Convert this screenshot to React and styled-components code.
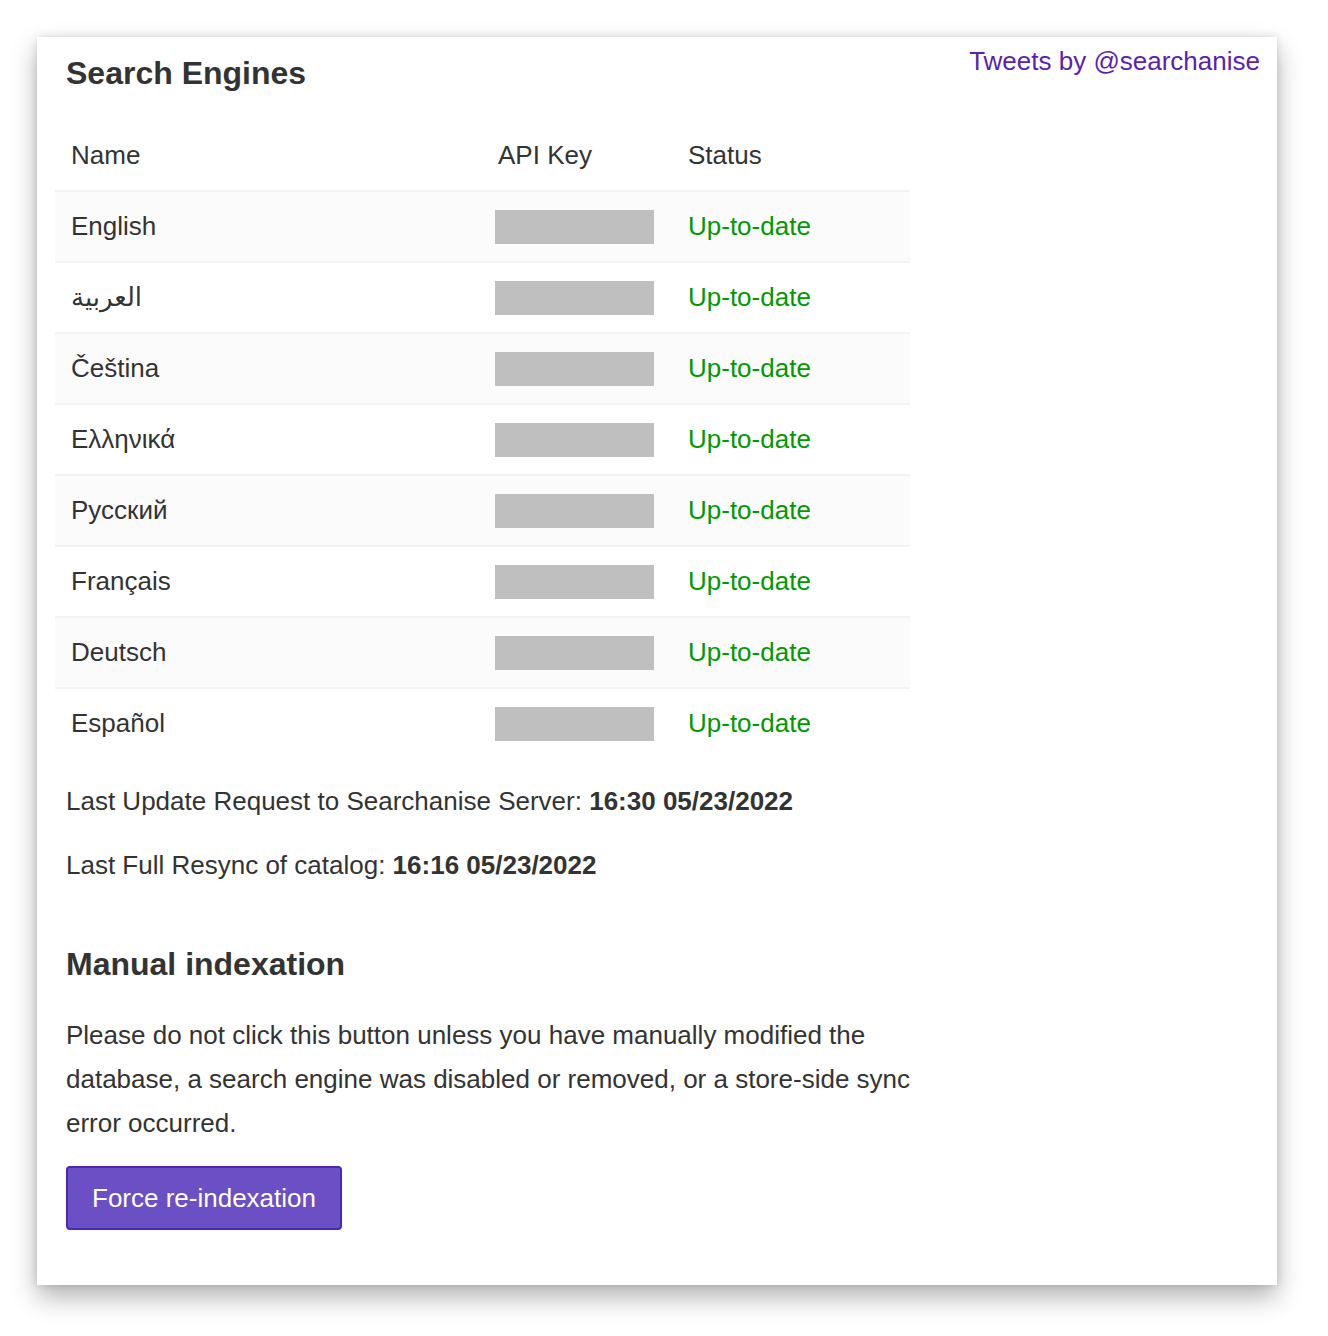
import React from "react";
import styled, { createGlobalStyle } from "styled-components";

const GlobalStyle = createGlobalStyle`
    body {
        margin: 0;
        background: #ffffff;
        font-family: "Liberation Sans", Arial, "DejaVu Sans", sans-serif;
        color: #333333;
    }
`

const Page = styled.div`
    padding: 37px 51px 51px 37px;
`

const Card = styled.div`
    background: #ffffff;
    box-shadow: 0 12px 24px rgba(0, 0, 0, 0.3), 0 0 8px rgba(0, 0, 0, 0.12);
    display: grid;
    grid-template-columns: 855px 1fr;
    padding: 9px 17px 55px 18px;
`

const Main = styled.div`
    display: flex;
    flex-direction: column;
`

const Side = styled.div`
    text-align: right;
`

const TweetsLink = styled.a`
    color: #5a1fb3;
    font-size: 26px;
    line-height: 30px;
    text-decoration: none;
`

const Heading = styled.h2`
    margin: ${p => p.$top}px 0 0 0;
    padding-left: 11px;
    font-size: 32px;
    line-height: 36px;
    font-weight: 700;
    color: #333333;
`

const Table = styled.table`
    margin-top: 29px;
    width: 100%;
    border-collapse: collapse;
    font-size: 26px;
`

const HeadCell = styled.th`
    text-align: left;
    font-weight: 400;
    height: 70px;
    padding: 0 16px;
`

const Row = styled.tr`
    background: ${p => p.$striped ? "#fbfbfb" : "#ffffff"};
    border-top: 2px solid #f3f3f3;
`

const Cell = styled.td`
    height: 69px;
    padding: 0 16px;
`

const KeyMask = styled.div`
    width: 159px;
    height: 34px;
    margin-left: -3px;
    background: #bfbfbf;
`

const Status = styled.span`
    color: #009a00;
`

const Info = styled.p`
    margin: ${p => p.$top}px -10px 0 0;
    padding-left: 11px;
    font-size: 26px;
    line-height: 44px;
`

const Button = styled.button`
    align-self: flex-start;
    margin: 21px 0 0 11px;
    height: 64px;
    padding: 0 24px;
    background: #6b4fc4;
    border: 2px solid #4f25b4;
    border-radius: 4px;
    color: #ffffff;
    font-family: inherit;
    font-size: 26px;
    cursor: pointer;
`

const engines = [
    "English",
    "العربية",
    "Čeština",
    "Ελληνικά",
    "Русский",
    "Français",
    "Deutsch",
    "Español",
]

export default function App() {
    return (
        <Page>
            <GlobalStyle/>
            <Card>
                <Main>
                    <Heading $top={9}>Search Engines</Heading>
                    <Table>
                        <colgroup>
                            <col style={{width: 427}}/>
                            <col style={{width: 190}}/>
                            <col/>
                        </colgroup>
                        <thead>
                            <tr>
                                <HeadCell>Name</HeadCell>
                                <HeadCell>API Key</HeadCell>
                                <HeadCell>Status</HeadCell>
                            </tr>
                        </thead>
                        <tbody>
                            {engines.map((name, i) => (
                                <Row key={name} $striped={i % 2 === 0}>
                                    <Cell>{name}</Cell>
                                    <Cell><KeyMask/></Cell>
                                    <Cell><Status>Up-to-date</Status></Cell>
                                </Row>
                            ))}
                        </tbody>
                    </Table>
                    <Info $top={21}>
                        Last Update Request to Searchanise Server: <b>16:30 05/23/2022</b>
                    </Info>
                    <Info $top={20}>
                        Last Full Resync of catalog: <b>16:16 05/23/2022</b>
                    </Info>
                    <Heading $top={59}>Manual indexation</Heading>
                    <Info $top={31}>
                        Please do not click this button unless you have manually modified the database, a search engine was disabled or removed, or a store-side sync error occurred.
                    </Info>
                    <Button>Force re-indexation</Button>
                </Main>
                <Side>
                    <TweetsLink href="#">Tweets by @searchanise</TweetsLink>
                </Side>
            </Card>
        </Page>
    )
}
